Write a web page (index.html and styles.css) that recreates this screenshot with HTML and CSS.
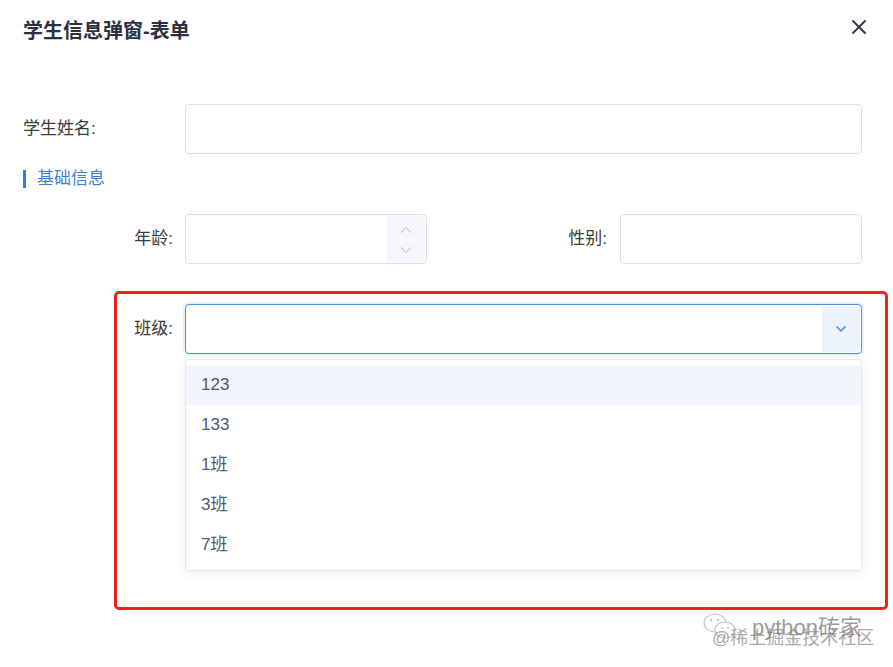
FILE: index.html
```html
<!DOCTYPE html>
<html lang="zh-CN">
<head>
<meta charset="utf-8">
<title>学生信息弹窗-表单</title>
<link rel="stylesheet" href="styles.css">
</head>
<body>
<div class="dialog">
  <div class="dialog-header">
    <span class="dialog-title">学生信息弹窗-表单</span>
    <svg class="close-icon" width="14" height="14" viewBox="0 0 14 14"><path d="M1 1 L13 13 M13 1 L1 13" stroke="#30334a" stroke-width="1.8" fill="none" stroke-linecap="round"/></svg>
  </div>

  <div class="form-row row-name">
    <label class="label label-left">学生姓名:</label>
    <div class="input grow"></div>
  </div>

  <div class="section-title"><span class="section-bar"></span><span class="section-text">基础信息</span></div>

  <div class="form-row row-pair">
    <label class="label label-a">年龄:</label>
    <div class="input input-half number-input">
      <div class="spinner">
        <svg width="12" height="8" viewBox="0 0 12 8"><path d="M1 6.5 L6 1.5 L11 6.5" stroke="#c6cad2" stroke-width="1.2" fill="none"/></svg>
        <svg width="12" height="8" viewBox="0 0 12 8"><path d="M1 1.5 L6 6.5 L11 1.5" stroke="#c6cad2" stroke-width="1.2" fill="none"/></svg>
      </div>
    </div>
    <label class="label label-b">性别:</label>
    <div class="input input-half"></div>
  </div>

  <div class="highlight-box">
    <label class="label label-c">班级:</label>
    <div class="select-wrap">
      <div class="input select-input">
        <div class="select-arrow">
          <svg width="12" height="8" viewBox="0 0 12 8"><path d="M1.5 1.5 L6 6 L10.5 1.5" stroke="#3f8be6" stroke-width="1.5" fill="none"/></svg>
        </div>
      </div>
      <ul class="dropdown">
        <li class="option hover">123</li>
        <li class="option">133</li>
        <li class="option">1班</li>
        <li class="option">3班</li>
        <li class="option">7班</li>
      </ul>
    </div>
  </div>

  <div class="watermark">
    <svg class="wm-icon" width="36" height="34" viewBox="0 0 36 34">
      <ellipse cx="13" cy="13" rx="11" ry="9" fill="rgba(255,255,255,0.8)" stroke="#c4c4c4" stroke-width="1.2"/>
      <ellipse cx="23" cy="20" rx="10" ry="8" fill="#fff" stroke="#c4c4c4" stroke-width="1.2"/>
      <circle cx="9" cy="10" r="1.2" fill="#c4c4c4"/>
      <circle cx="16" cy="10" r="1.2" fill="#c4c4c4"/>
      <circle cx="20" cy="18" r="1" fill="#c4c4c4"/>
      <circle cx="26" cy="18" r="1" fill="#c4c4c4"/>
    </svg>
    <span class="wm-line1">python砖家</span>
    <span class="wm-line2">@稀土掘金技术社区</span>
  </div>
</div>
</body>
</html>
```

FILE: styles.css
```css
* { box-sizing: border-box; }
html, body { margin: 0; padding: 0; background: #fff; }
body {
  font-family: "Liberation Sans", "Noto Sans CJK SC", sans-serif;
  color: #3a3a3a;
  width: 893px;
  height: 667px;
  overflow: hidden;
}
.dialog {
  position: relative;
  padding: 0 31px 0 23px;
  height: 667px;
}
.dialog-header {
  height: 62px;
  display: flex;
  align-items: center;
  justify-content: space-between;
}
.dialog-title {
  font-size: 20px;
  font-weight: bold;
  color: #2d2f40;
  line-height: 24px;
}
.close-icon { margin-right: -4px; margin-top: -8px; }

.form-row { display: flex; align-items: center; }
.row-name { margin-top: 42px; }
.label {
  font-size: 17px;
  line-height: 20px;
  color: #3b3b3b;
  flex: none;
}
.label-left { width: 162px; }
.label-a { width: 162px; text-align: right; padding-right: 12px; }
.label-b { width: 193px; text-align: right; padding-right: 13px; }
.label-c { width: 68px; text-align: right; padding-right: 12px; height: 50px; line-height: 50px; }

.input {
  height: 50px;
  border: 1px solid #dcdfe6;
  border-radius: 4px;
  background: #fff;
}
.grow { flex: 1; }
.input-half { width: 242px; flex: none; }

.number-input { display: flex; justify-content: flex-end; padding: 1px; }
.spinner {
  width: 38px;
  background: #f5f7fa;
  border-radius: 0 3px 3px 0;
  display: flex;
  flex-direction: column;
  align-items: center;
  justify-content: space-between;
  padding: 10px 0 8px;
}

.section-title {
  display: flex;
  align-items: center;
  margin-top: 16px;
  height: 18px;
}
.section-bar {
  width: 3px;
  height: 18px;
  background: #2f7de1;
  margin-right: 11px;
}
.section-text {
  font-size: 17px;
  line-height: 20px;
  color: #3a80d9;
}
.row-pair { margin-top: 26px; }

.highlight-box {
  margin: 27px -26px 0 91px;
  border: 3px solid #f0201c;
  border-radius: 5px;
  padding: 10px 23px 36px 0;
  display: flex;
  align-items: flex-start;
}
.select-wrap { flex: 1; }
.select-input {
  border-color: #4c8fe3;
  box-shadow: 0 0 0 2px rgba(64, 140, 230, 0.12);
  display: flex;
  justify-content: flex-end;
  padding: 1px;
}
.select-arrow {
  width: 38px;
  background: #ebf2fc;
  border-radius: 0 3px 3px 0;
  display: flex;
  align-items: center;
  justify-content: center;
}
.dropdown {
  list-style: none;
  margin: 5px 0 0;
  padding: 5px 0;
  border: 1px solid #e4e7ed;
  border-radius: 4px;
  background: #fff;
  box-shadow: 0 2px 12px rgba(0, 0, 0, 0.08);
}
.option {
  height: 40px;
  line-height: 40px;
  padding: 0 15px;
  font-size: 17px;
  color: #525966;
}
.option.hover { background: #f2f5fc; }

.watermark {
  position: absolute;
  left: 700px;
  top: 606px;
  width: 190px;
  height: 50px;
  pointer-events: none;
}
.wm-icon { position: absolute; left: 2px; top: 4px; }
.wm-line1 {
  position: absolute;
  left: 52px;
  top: 9px;
  font-size: 22px;
  line-height: 26px;
  color: rgba(110, 110, 110, 0.7);
}
.wm-line2 {
  position: absolute;
  left: 12px;
  top: 21px;
  font-size: 18px;
  line-height: 22px;
  color: rgba(130, 130, 130, 0.7);
}
```
